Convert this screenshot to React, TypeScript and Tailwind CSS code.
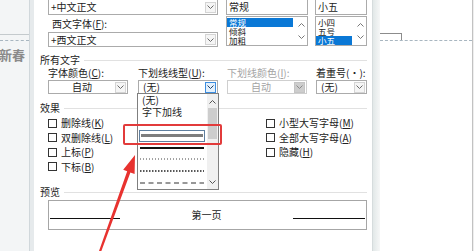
import type { ReactNode } from "react";

type Tone = "normal" | "active" | "disabled";

function Chevron({ up = false }: { up?: boolean }) {
  return (
    <svg width="7" height="4" viewBox="0 0 7 4" className="block">
      <path
        d={up ? "M0.5 3.5L3.5 0.5L6.5 3.5" : "M0.5 0.5L3.5 3.5L6.5 0.5"}
        fill="none"
        stroke="currentColor"
        strokeWidth="1"
      />
    </svg>
  );
}

function DropButton({ tone = "normal" }: { tone?: Tone }) {
  const look =
    tone === "active"
      ? "border-[#3d8ee0] bg-[#e3f0fc] text-[#1f3f66]"
      : tone === "disabled"
        ? "border-[#c4c4c4] bg-[#cdcdcd] text-[#8a8a8a]"
        : "border-[#d4d4d4] bg-[#f5f5f5] text-[#6a6a6a]";
  return (
    <span className={`mr-px flex h-[11px] w-[11px] shrink-0 items-center justify-center border ${look}`}>
      <Chevron />
    </span>
  );
}

function Combo({ children, className = "" }: { children: ReactNode; className?: string }) {
  return (
    <div className={`flex w-[170px] items-center border border-[#ababab] bg-white ${className}`}>
      <span className="flex-1 pl-[2px] leading-none">{children}</span>
      <DropButton />
    </div>
  );
}

function Select({
  text,
  tone = "normal",
  center = false,
  width = "w-[80px]",
}: {
  text: string;
  tone?: Tone;
  center?: boolean;
  width?: string;
}) {
  const border = tone === "disabled" ? "border-[#cfcfcf] text-[#a3a3a3]" : "border-[#ababab]";
  return (
    <div className={`flex h-[14px] items-center border bg-white ${border} ${width}`}>
      <span className={`flex-1 leading-none ${center ? "text-center" : "pl-[4px]"}`}>{text}</span>
      <DropButton tone={tone} />
    </div>
  );
}

function Header({ children, className = "" }: { children: ReactNode; className?: string }) {
  return (
    <div className={`flex h-[12px] items-center leading-[12px] ${className}`}>
      <span>{children}</span>
      <span className="ml-[4px] mr-[5px] h-px flex-1 bg-[#e1e1e1]" />
    </div>
  );
}

function Check({ label, k }: { label: string; k: string }) {
  return (
    <div className="flex h-[14.5px] items-center">
      <span className="h-[9px] w-[9px] shrink-0 border border-[#333] bg-white" />
      <span className="ml-[4px] leading-none">
        {label}(<u>{k}</u>)
      </span>
    </div>
  );
}

function Line({ kind }: { kind: "thick" | "dotted" | "dotted2" | "dashed" }) {
  return (
    <svg width="64" height="4" viewBox="0 0 64 4" className="block">
      {kind === "thick" && <line x1="0" y1="2" x2="64" y2="2" stroke="#111" strokeWidth="2" />}
      {kind === "dotted" && (
        <line x1="0" y1="2" x2="64" y2="2" stroke="#444" strokeWidth="1" strokeDasharray="1 2" />
      )}
      {kind === "dotted2" && (
        <line x1="0" y1="2" x2="64" y2="2" stroke="#222" strokeWidth="1.5" strokeDasharray="1.5 1.5" />
      )}
      {kind === "dashed" && (
        <line x1="0" y1="2" x2="64" y2="2" stroke="#333" strokeWidth="1.2" strokeDasharray="5 3.5" />
      )}
    </svg>
  );
}

export default function App() {
  return (
    <div className="relative flex h-[251px] w-[474px] overflow-hidden bg-white font-['Noto_Sans_CJK_SC','Noto_Sans',sans-serif] text-[10px] text-[#222]">
      {/* document behind, left */}
      <div className="w-[29px] shrink-0 bg-[#f3f5f6] pt-[34px]">
        <div className="h-px bg-[#c4cacd]" />
        <div className="mt-[5px] border-t border-dashed border-[#a8b6c0]" />
        <div className="-ml-px mt-[7px] text-[13px] font-bold leading-[14px] text-[#8a8a8a]">新春</div>
      </div>
      <div className="w-[5px] shrink-0 border-l border-[#d0d7db] bg-[#e6eaec]" />

      {/* dialog */}
      <div className="w-[338px] shrink-0 bg-white pl-[6px]">
        <div className="-mt-px ml-[8px] flex">
          <div className="flex w-[170px] flex-col">
            <Combo className="h-[16px]">+中文正文</Combo>
            <div className="h-[17px] pl-[4px] leading-[17px]">
              西文字体(<u>F</u>):
            </div>
            <Combo className="h-[15px]">+西文正文</Combo>
          </div>

          <div className="ml-[8px] flex w-[82px] flex-col">
            <div className="flex h-[16px] items-center border border-[#ababab] pl-[2px] leading-none">常规</div>
            <div className="mt-px flex h-[30px] border border-[#ababab]">
              <div className="flex flex-1 flex-col pt-px text-[8.5px] leading-[9px]">
                <span className="h-[9px] w-[66px] bg-[#0a78d6] pl-[2px] text-white">常规</span>
                <span className="h-[9px] pl-[2px]">倾斜</span>
                <span className="h-[9px] pl-[2px]">加粗</span>
              </div>
              <div className="flex w-[11px] flex-col items-center justify-between py-[6px] text-[#777]">
                <Chevron up />
                <Chevron />
              </div>
            </div>
          </div>

          <div className="ml-[7px] flex w-[52px] flex-col">
            <div className="flex h-[16px] items-center border border-[#ababab] pl-[2px] leading-none">小五</div>
            <div className="mt-px flex h-[30px] border border-[#ababab]">
              <div className="flex flex-1 flex-col pt-px text-[8.5px] leading-[9px]">
                <span className="h-[9px] pl-[2px]">小四</span>
                <span className="h-[9px] pl-[2px]">五号</span>
                <span className="h-[9px] w-[36px] bg-[#0a78d6] pl-[2px] text-white">小五</span>
              </div>
              <div className="flex w-[11px] flex-col items-center justify-between py-[6px] text-[#777]">
                <Chevron up />
                <Chevron />
              </div>
            </div>
          </div>
        </div>

        <Header className="mt-[7px]">所有文字</Header>

        <div className="ml-[8px] mt-px flex">
          <div className="w-[90px]">
            <div className="h-[12px] leading-[12px]">
              字体颜色(<u>C</u>):
            </div>
            <div className="mt-px">
              <Select text="自动" center />
            </div>
          </div>
          <div className="w-[89px]">
            <div className="h-[12px] leading-[12px]">
              下划线线型(<u>U</u>):
            </div>
            <div className="mt-px">
              <Select text="(无)" tone="active" />
            </div>
          </div>
          <div className="w-[89px]">
            <div className="h-[12px] leading-[12px] text-[#a3a3a3]">
              下划线颜色(<u>I</u>):
            </div>
            <div className="mt-px">
              <Select text="自动" tone="disabled" center />
            </div>
          </div>
          <div className="w-[51px]">
            <div className="h-[12px] leading-[12px]">着重号(·):</div>
            <div className="mt-px">
              <Select text="(无)" width="w-[51px]" />
            </div>
          </div>
        </div>

        <Header className="mt-[8px]">效果</Header>

        <div className="ml-[8px] mt-[2px] flex">
          <div className="w-[218px]">
            <Check label="删除线" k="K" />
            <Check label="双删除线" k="L" />
            <Check label="上标" k="P" />
            <Check label="下标" k="B" />
          </div>
          <div>
            <Check label="小型大写字母" k="M" />
            <Check label="全部大写字母" k="A" />
            <Check label="隐藏" k="H" />
          </div>
        </div>

        <Header className="mt-[12px]">预览</Header>

        <div className="ml-[8px] mt-[2px] flex h-[30px] w-[319px] items-center justify-between border border-[#a6a6a6] px-px">
          <span className="mt-[6px] h-px w-[70px] bg-[#111]" />
          <span className="leading-none">第一页</span>
          <span className="mt-[6px] h-px w-[72px] bg-[#111]" />
        </div>
      </div>

      {/* dialog frame, right */}
      <div className="w-[8px] shrink-0 border-l border-[#d6dcdd] bg-gradient-to-r from-[#e2e8e8] to-[#f6f7f7]" />

      {/* document behind, right */}
      <div className="flex flex-1">
        <div className="flex-1 pt-[33px]">
          <div className="flex">
            <div className="h-[7px] w-[22px] border-r border-t border-[#8c8c8c]" />
          </div>
          <div className="border-t border-dashed border-[#a8b6c0]" />
        </div>
        <div className="w-[2px] border-l border-[#c2c2c2] bg-[#eeeeee]" />
      </div>

      {/* open dropdown of 下划线线型 */}
      <div className="absolute left-[137px] top-[93px] flex h-[97px] w-[82px] border border-[#7f7f7f] bg-white">
        <div className="flex flex-1 flex-col">
          <div className="h-[12px] pl-[4px] leading-[12px]">(无)</div>
          <div className="h-[12px] pl-[4px] leading-[12px]">字下加线</div>
          <div className="h-[12px]" />
          <div className="flex h-[12px] items-center pl-px">
            <div className="flex h-[12px] w-[66px] items-center justify-center border border-[#5f7f9f]">
              <div className="h-[3px] w-[62px] bg-[#7d7d7d]" />
            </div>
          </div>
          <div className="flex h-[12px] items-center pl-[2px]">
            <Line kind="thick" />
          </div>
          <div className="flex h-[12px] items-center pl-[2px]">
            <Line kind="dotted" />
          </div>
          <div className="flex h-[12px] items-center pl-[2px]">
            <Line kind="dotted2" />
          </div>
          <div className="flex h-[12px] items-center pl-[2px]">
            <Line kind="dashed" />
          </div>
        </div>
        <div className="flex w-[11px] flex-col items-center bg-[#f0f0f0] text-[#555]">
          <div className="mt-[6px]">
            <Chevron up />
          </div>
          <div className="mt-[4px] h-[31px] w-[9px] bg-[#cdcdcd]" />
          <div className="mt-auto mb-[5px]">
            <Chevron />
          </div>
        </div>
      </div>

      {/* annotation */}
      <div className="absolute left-[123px] top-[124px] h-[21px] w-[99px] rounded-[2px] border-2 border-[#e23b3b]" />
      <svg className="pointer-events-none absolute left-0 top-0" width="474" height="251" viewBox="0 0 474 251">
        <polygon
          points="135,155 134.6,174 130.4,172.5 101,252 99,251 127.2,171.3 123.2,169.8"
          fill="#e8322f"
        />
      </svg>
    </div>
  );
}
